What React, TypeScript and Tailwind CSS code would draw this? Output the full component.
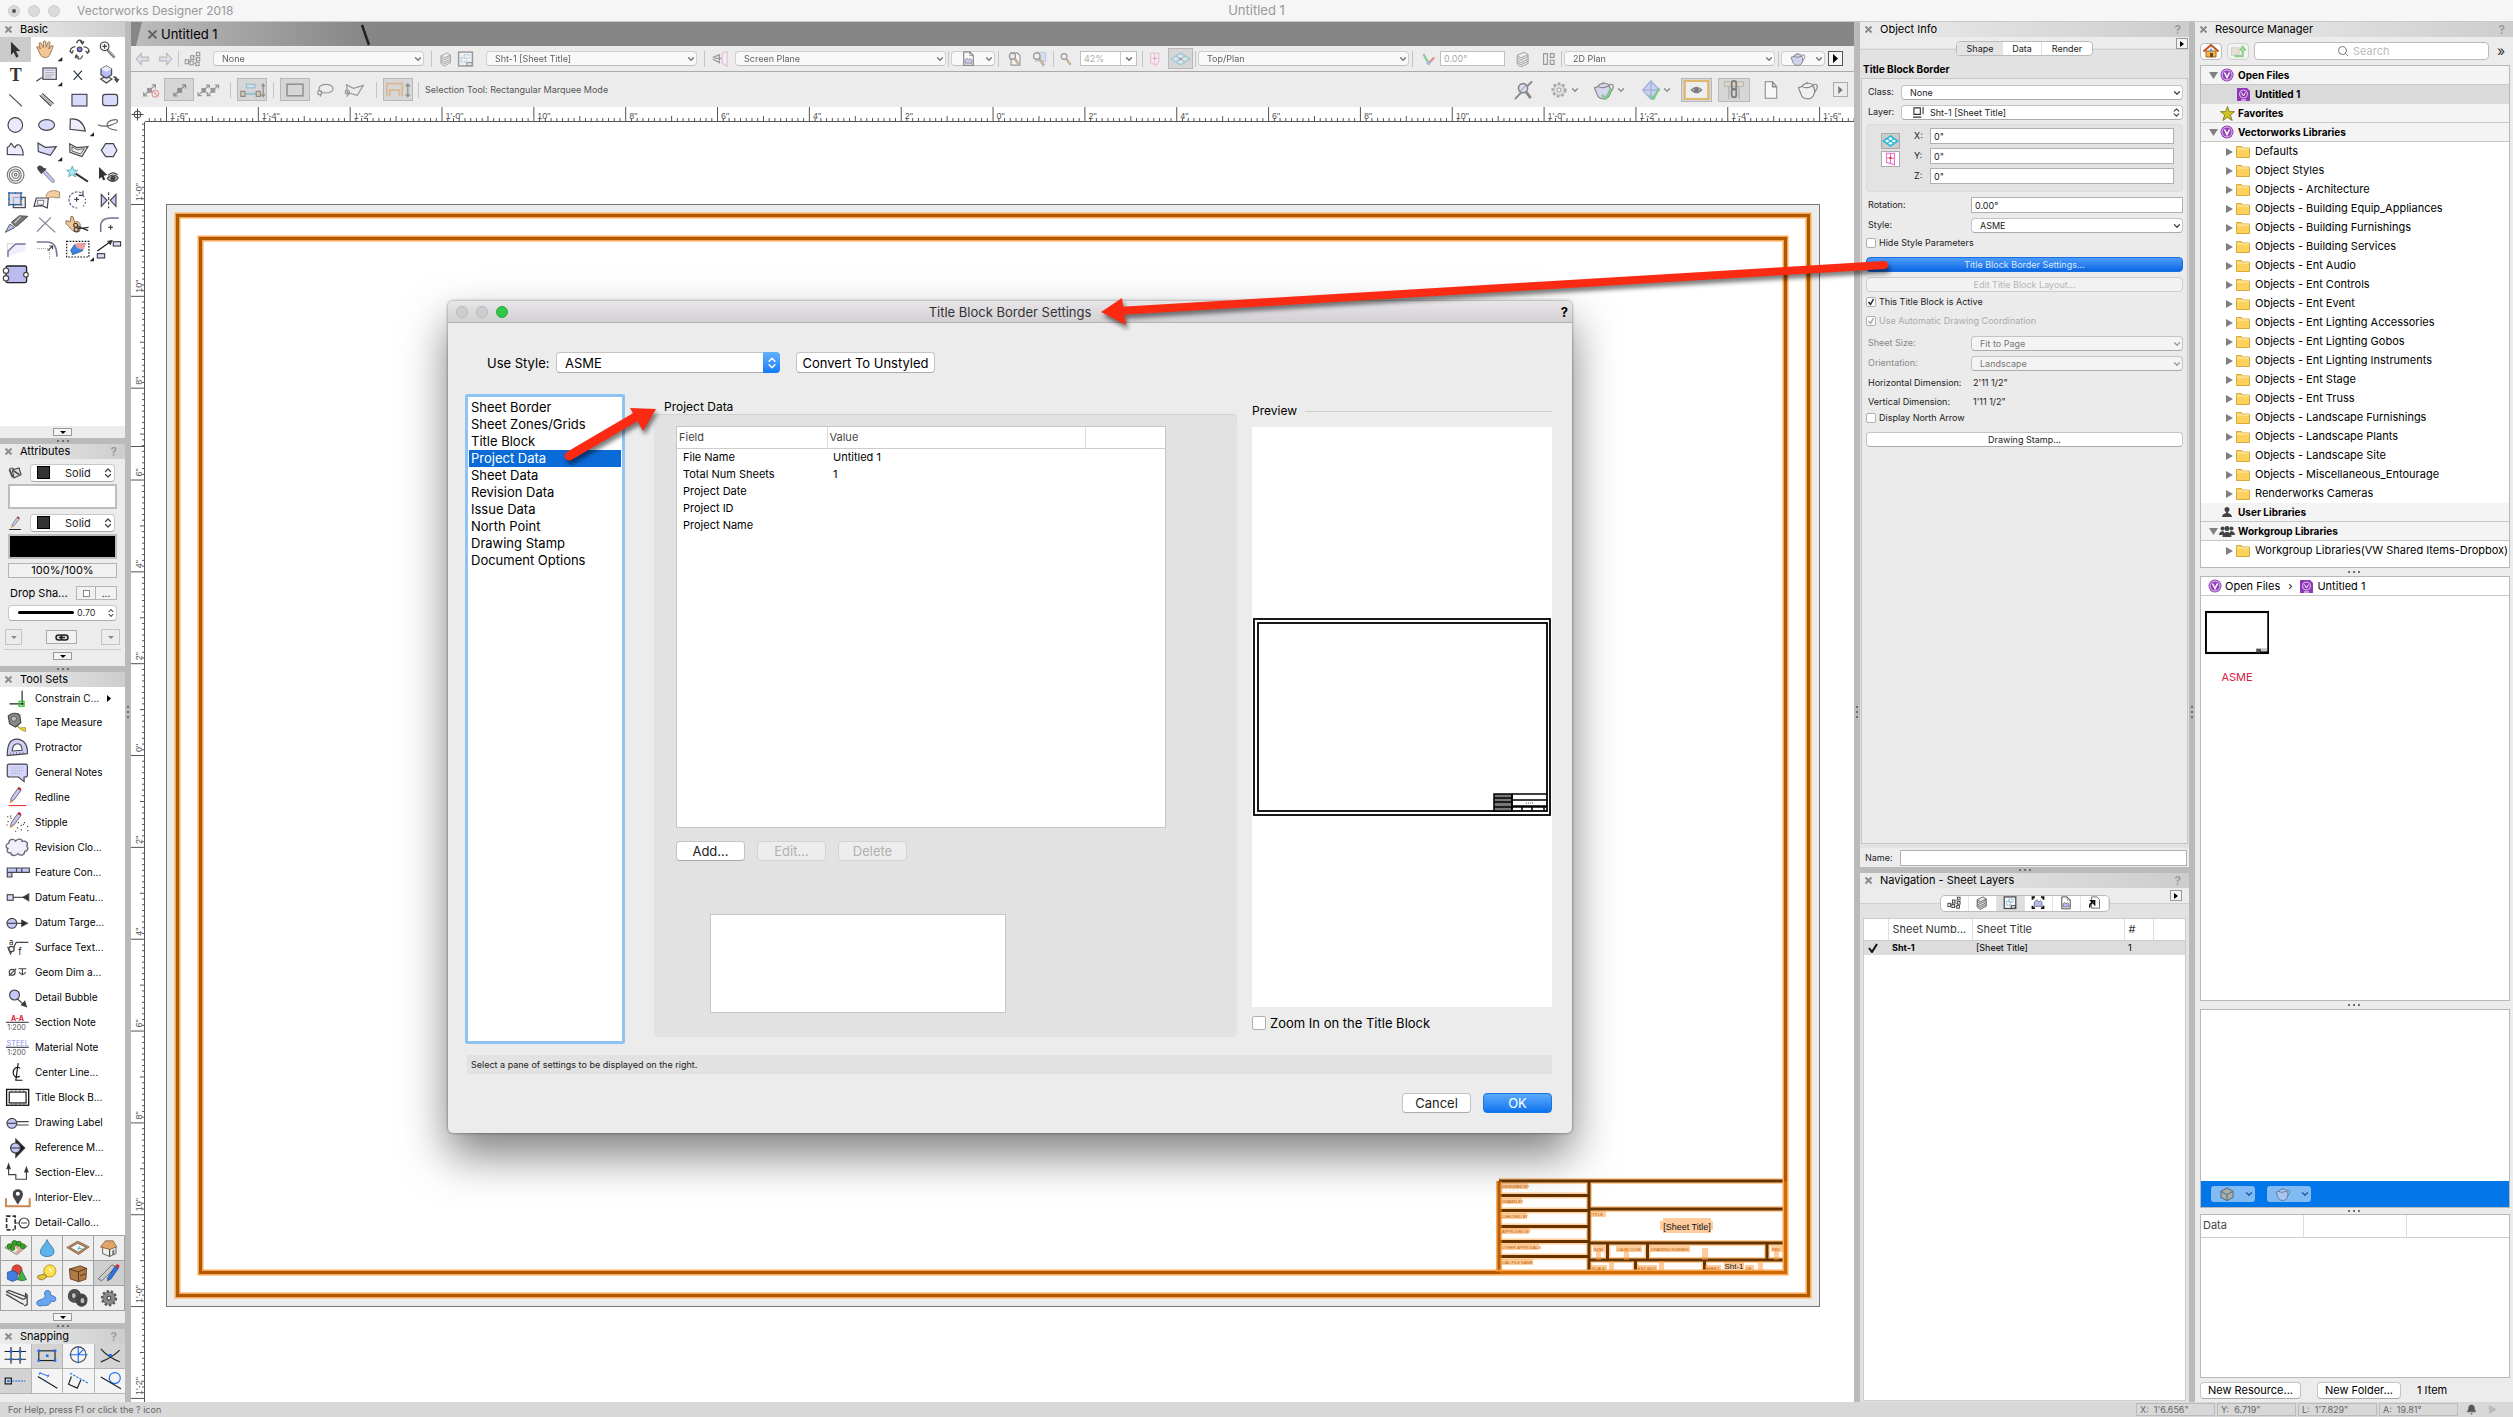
import { useState } from 'react';
import type { ReactNode } from 'react';
import { ChevronDown, ChevronsUpDown, Search, Bell } from 'lucide-react';

const LAV = '#d9dafa';
const INK = '#444448';

/* ---------- small shared pieces ---------- */

function Art({ box, className, children }: { box: string; className: string; children: ReactNode }) {
    return (
        <svg viewBox={box} className={className} fill="none" stroke={INK} strokeWidth="3.5" aria-hidden="true">
            {children}
        </svg>
    );
}

function PanelHeader({ title, help = true }: { title: string; help?: boolean }) {
    return (
        <div className="flex h-[15px] shrink-0 items-center bg-linear-to-r from-[#ececec] to-[#cdcdcd] pr-2 pl-[5px]">
            <button aria-label={`Close ${title}`} className="flex size-[7px] items-center">
                <svg viewBox="0 0 7 7" className="size-[7px]" stroke="#8c8c8c" strokeWidth="2"><path d="M.5 .5l6 6M6.5 .5l-6 6" /></svg>
            </button>
            <h2 className="ml-2 flex-1 text-[11px] leading-[15px] text-black">{title}</h2>
            {help && <button aria-label={`${title} help`} className="text-xs leading-[15px] font-semibold text-[#999]">?</button>}
        </div>
    );
}

function Dots({ vertical = false }: { vertical?: boolean }) {
    return (
        <span className={vertical ? 'flex flex-col gap-[3px]' : 'flex gap-[3px]'}>
            <i className="size-[2px] bg-[#6f6f6f]" /><i className="size-[2px] bg-[#6f6f6f]" /><i className="size-[2px] bg-[#6f6f6f]" />
        </span>
    );
}

function Splitter() {
    return <div className="flex h-[6px] shrink-0 items-center justify-center bg-[#bababa]"><Dots /></div>;
}

function Gutter() {
    return <div className="flex w-[6px] shrink-0 items-center justify-center bg-[#bababa]"><Dots vertical /></div>;
}

function MoreBar() {
    return (
        <div className="flex h-3 shrink-0 items-center justify-center bg-[#ececec]">
            <button aria-label="More" className="flex h-2 w-[19px] items-center justify-center border border-[#999] bg-[#f4f4f4]">
                <svg viewBox="0 0 6 3" className="h-[3px] w-[6px]"><path d="M0 0h6L3 3z" /></svg>
            </button>
        </div>
    );
}

function FlyButton({ label }: { label: string }) {
    return (
        <button aria-label={label} className="flex h-[11px] w-3 items-center justify-center border border-[#999] bg-[#f3f3f3]">
            <svg viewBox="0 0 4 6" className="h-[6px] w-1"><path d="M0 0v6l4-3z" /></svg>
        </button>
    );
}

type SelectProps = { label: string; value: string; className: string; pad?: string; updown?: boolean; disabled?: boolean };

function Select({ label, value, className, pad = 'pl-2', updown, disabled }: SelectProps) {
    return (
        <span className={'relative flex h-[15px] ' + className}>
            <select
                aria-label={label}
                disabled={disabled}
                className={'size-full appearance-none rounded-[4px] border border-[#c4c4c4] border-b-[#aaa] text-[9px] leading-[13px] ' + pad + (disabled ? ' bg-[#f4f4f4] text-[#777]' : ' bg-white text-[#222]')}
            >
                <option>{value}</option>
            </select>
            {updown
                ? <ChevronsUpDown className="pointer-events-none absolute top-[2px] right-[1px] size-[11px] text-[#444]" strokeWidth={2.5} />
                : <ChevronDown className={'pointer-events-none absolute top-[3px] right-[1px] size-[10px] ' + (disabled ? 'text-[#999]' : 'text-[#444]')} strokeWidth={3} />}
        </span>
    );
}

function Check({ label, checked = false, disabled = false, big = false }: { label: string; checked?: boolean; disabled?: boolean; big?: boolean }) {
    const [on, setOn] = useState(checked);
    return (
        <label className={'flex items-center ' + (big ? 'gap-1 text-[13px] leading-4 text-black' : 'gap-[3px] text-[9px] ') + (disabled ? 'text-[#aaa]' : 'text-[#222]')}>
            <span className={'relative flex ' + (big ? 'size-[14px]' : 'size-[10px]')}>
                <input
                    type="checkbox"
                    checked={on}
                    disabled={disabled}
                    onChange={() => setOn(!on)}
                    className="size-full appearance-none rounded-[2px] border border-[#b0b0b0] bg-white"
                />
                {on && <svg viewBox="0 0 10 10" className="pointer-events-none absolute inset-0" fill="none" stroke="currentColor" strokeWidth="1.5"><path d="M2.5 5l2 2.5 3-5.5" /></svg>}
            </span>
            {label}
        </label>
    );
}

/* ---------- Basic palette: every drawing uses a 94 x 75 cell ---------- */

const flyout = <path d="M94 60v13H80z" fill="#222" stroke="none" />;

const basicTools: [string, ReactNode][] = [
    ['Selection', <path d="M33 14L61 42L48 43L56 58L49 62L41 46L33 54z" fill="#333" stroke="none" />],
    ['Pan', <><path d="M17 30c5-3 8 0 11 6L24 19c3-4 6-2 7 1l6 12V14c3-4 7-3 7 0l2 17 5-15c3-3 7-1 6 3l-3 17 7-10c4-2 7 1 5 4L56 55c-5 9-20 8-26 1z" fill="#f3c795" stroke="#8a6848" strokeWidth="2.5" />{flyout}</>],
    ['Flyover', <><circle cx="50" cy="37" r="7" fill="#7b86e8" /><path d="M25 47c-8-9 2-17 12-18M62 29c14 2 20 11 12 18M39 54c3 16 16 16 20 1M59 20C56 6 44 6 41 19M20 42l7 7 4-9M68 42l6 7 6-8M52 13l7 8 4-9M48 62l-8-8-4 10" /></>],
    ['Zoom', <><path d="M39 37L62 62" stroke="#777" strokeWidth="8" /><path d="M41 37L62 60" stroke="#ddd" strokeWidth="2" /><circle cx="32" cy="28" r="13" fill="#f7f7fb" /><path d="M25 28h14M32 21v14" /></>],
    ['Text', <text x="29" y="57" fontSize="54" fontFamily="Liberation Serif, serif" fontWeight="bold" fill="#333" stroke="none">T</text>],
    ['Callout', <><path d="M16 58l14-10h7" /><rect x="36" y="18" width="40" height="34" fill="#e8e8fb" /><path d="M42 25h28M42 32h28M42 39h28M42 45h20" strokeWidth="2" stroke="#888" />{flyout}</>],
    ['Locus', <path d="M32 26L57 54M57 26L32 54" stroke="#1f3a44" />],
    ['Symbol Insertion', <><path d="M20 51l17-9 17 9-17 12z" fill="#eee" /><path d="M37 12l16 9v17l-16 11-16-11V21z" fill="#b9bbf4" /><path d="M21 21l16 8 16-8L37 12z" fill="#eeeefe" stroke="none" /><path d="M58 45c10-2 12 3 11 10M62 52l7 9 6-9z" fill="#555" strokeWidth="3" /></>],
    ['Line', <path d="M28 22l38 36" />],
    ['Double Line', <><path d="M26 25l34 32M34 19l34 31" /><path d="M31 23l33 31" stroke="#999" /></>],
    ['Rectangle', <rect x="27" y="22" width="45" height="35" fill={LAV} />],
    ['Rounded Rectangle', <rect x="26" y="22" width="45" height="34" rx="8" fill={LAV} />],
    ['Circle', <circle cx="46" cy="39" r="22" fill="#e9eafc" />],
    ['Oval', <ellipse cx="47" cy="39" rx="24" ry="16" fill={LAV} />],
    ['Arc', <><path d="M22 21c24-2 40 12 45 36L21 52z" fill="#ececfc" />{flyout}</>],
    ['Freehand', <path d="M12 38c10 5 22 6 36 2 14-4 24-9 23-14-3-6-29-2-32 12-1 14 22 16 31 17" stroke="#666" />],
    ['Polyline', <path d="M22 52V31c7-2 9-9 11-12 6 2 5 13 12 13 3-9 10-12 17-5 6 8 8 14 8 27z" fill="#ececfc" />],
    ['Polygon', <><path d="M21 18l22 13 33-2-18 26-36-11z" fill={LAV} />{flyout}</>],
    ['Double Polygon', <><path d="M20 20l22 12 33-3-18 30-36-13z" fill="#eee" /><path d="M27 29l16 9 21-3-11 16-26-9z" strokeWidth="2.5" /></>],
    ['Regular Polygon', <path d="M35 20h23l11 20-11 19H35L22 40z" fill="#e4e5fc" />],
    ['Spiral', <><circle cx="47" cy="39" r="25" stroke="#777" /><circle cx="46" cy="39" r="18" stroke="#777" /><circle cx="47" cy="38" r="11" stroke="#777" /><circle cx="47" cy="38" r="4" stroke="#777" /></>],
    ['Eyedropper', <><path d="M32 28l8-7 30 33c3 8-3 9-8 6z" fill="#babdf3" stroke="#888" strokeWidth="2.5" /><path d="M20 17c5-9 14-3 15 1l9 3-13 13c-3-6-9-8-11-17z" fill="#444" /></>],
    ['Attribute Wand', <><path d="M38 35l37 24" stroke="#333" strokeWidth="6" /><path d="M28 12l4 12 12 1-10 8 4 12-11-7-10 6 3-12-9-7 12-1z" fill="#a5eef5" stroke="#418c9c" strokeWidth="2" /></>],
    ['Visibility', <><path d="M15 15L40 39L29 41L34 53L27 55L23 45L15 51z" fill="#333" stroke="none" /><path d="M40 49c10-13 25-13 33-1-8 14-26 13-33 1z" fill="#bbb" /><circle cx="57" cy="49" r="6" fill="#444" /><path d="M42 40c9-9 20-9 29-2" /></>],
    ['Clip', <><rect x="40" y="31" width="36" height="31" fill="#eee" /><rect x="27" y="18" width="36" height="35" fill="#d3d4f6" fillOpacity=".7" /><path d="M24 18h6m14 0h5m12 0h6M24 36h5m33 0h5M24 53h6m14 0h5m12 0h6" stroke="#1688f2" strokeWidth="6" /></>],
    ['Reshape', <><path d="M9 58l7-25h36l-3 30-16-7z" fill="#f4f4fa" /><path d="M19 40h20l-2 13-16 2z" strokeWidth="2" /><path d="M46 23c6-12 22-16 40-8v17c-12 3-18-5-27-1-6 3-16 1-13-8z" fill="#f3cda4" stroke="#9c7854" strokeWidth="2.5" /></>],
    ['Rotate', <><path d="M55 18c-14-10-37 2-37 19 0 14 10 26 25 26" stroke="#5b5b8c" strokeDasharray="8 4" /><path d="M60 26c10 9 12 22 0 32" stroke="#5b5b8c" strokeDasharray="5 6" /><path d="M60 11v14H47M41 30v14M34 37h14" /></>],
    ['Mirror', <><path d="M22 22v36l17-18zM66 22v36L49 40z" fill="#c7c9f6" /><path d="M44 16v48" strokeDasharray="9 5" /></>],
    ['Split', <><path d="M16 61l14-25 14 11z" fill="#b9bcee" strokeWidth="2.5" /><path d="M34 31L58 11l26 2-30 27-8 4z" fill="#777" strokeWidth="2.5" /><path d="M62 14L44 33" stroke="#ccc" /></>],
    ['Trim', <path d="M18 59L60 16M24 17l49 44" stroke="#7c7c92" />],
    ['Connect', <><path d="M9 26l13 3 2-16 6 1 5 17c8-6 17 0 17 10l-2 17c-14 6-23-3-31-13l-10-10z" fill="#f3c795" stroke="#7d5a3a" strokeWidth="2.5" /><circle cx="38" cy="40" r="6" /><circle cx="40" cy="53" r="6" /><path d="M44 43l32 13M45 50l32-4" strokeWidth="4" stroke="#333" /></>],
    ['Fillet', <><path d="M20 60V40c2-15 15-22 30-22h25" stroke="#76769c" strokeWidth="4.5" /><path d="M22 60V20h50" stroke="#777" strokeWidth="2" strokeDasharray="2 4" /><path d="M50 39v14M43 46h14" /></>],
    ['Chamfer', <><path d="M24 58V43l23-22h30v20L24 58z" fill="#eeeefd" stroke="none" /><path d="M24 60V43l23-22h30" stroke="#76769c" strokeWidth="4.5" /><path d="M22 40V20h20" strokeWidth="2" strokeDasharray="2 4" /></>],
    ['Offset', <><path d="M17 15h30c20 0 30 10 31 44" stroke="#76769c" strokeWidth="5" /><path d="M18 35h38v30" strokeWidth="2.5" strokeDasharray="2 4" /><path d="M50 41l14-13M55 27h10v10" /></>],
    ['Eraser', <><rect x="11" y="13" width="67" height="47" stroke="#111" strokeDasharray="5 4" /><path d="M23 40l12-18 32-2-9 22-29 11z" fill="#3a86e8" stroke="#345" strokeWidth="2" /><path d="M35 22l15-5 18 5-7 16-18-4z" fill="#ef9e9e" stroke="none" />{flyout}</>],
    ['Connection', <><path d="M10 42l42-30" stroke="#111" /><path d="M54 11l-12 2 7 9z" fill="#111" /><rect x="58" y="14" width="22" height="13" fill={LAV} /><rect x="10" y="50" width="22" height="13" fill={LAV} /></>],
    ['Symbol', <><rect x="18" y="12" width="62" height="50" rx="5" fill="#babcf0" stroke="#222" strokeWidth="4" /><circle cx="18" cy="26" r="8" fill="#fff" /><circle cx="18" cy="49" r="8" fill="#fff" /><circle cx="78" cy="38" r="7" fill="#fff" /></>],
];

/* ---------- Tool sets: 100 x 75 cells ---------- */

const bubble = <><circle cx="36" cy="40" r="15" fill="#c6c8f7" /><path d="M21 40h30" /></>;
const pencil = <><path d="M31 50l4-13 20-28 9 6-21 29z" fill="#c6c8f2" stroke="#555" strokeWidth="2.5" /><path d="M53 11l9 6 3-6-8-6z" fill="#c0272d" stroke="none" /><path d="M29 56l3-12 8 6z" fill="#e0a45c" stroke="none" /></>;

const toolSets: [string, ReactNode][] = [
    ['Constrain C...', <><path d="M29 54h44M67 14v44" stroke="#222" /><rect x="58" y="46" width="15" height="15" stroke="#18c71b" /></>],
    ['Tape Measure', <><path d="M45 34l14 20 18-1v12l-12-5-20-17z" fill="#f2d92c" stroke="#8a7c1d" strokeWidth="2" /><path d="M25 18c7-10 29-12 35-2l3 22-16 13-18-10z" fill="#888" /><circle cx="42" cy="26" r="8" fill="#bbb" strokeWidth="2" /></>],
    ['Protractor', <><path d="M22 62c0-31 7-51 31-50 24 3 31 20 30 44z" fill="#cfd1f9" /><path d="M37 48c1-16 6-22 16-22 9 0 14 8 14 20z" fill="#fff" /><path d="M31 60v-7m9 6v-6m10 4v-5m10 4v-5m10 4v-5" strokeWidth="2" /></>],
    ['General Notes', <><path d="M22 17q0-5 6-5h50q5 0 5 5v28q0 6-6 6h-4v14L56 51H28q-6 0-6-6z" fill="#d3d5fb" /><path d="M34 24h37M34 32h37M34 40h30" stroke="#999" strokeWidth="2" strokeDasharray="3 3" /></>],
    ['Redline', <>{pencil}<path d="M26 62h54" stroke="#e0262b" strokeWidth="3" /></>],
    ['Stipple', <>{pencil}<path d="M22 20h3m7 5h3m-12 10h3m-6 10h3m8-27h3m20 20h3m6 8h3m-14 8h3m8 6h3m-20 4h3m24-26h3m6 12h3m-2 12h3m-16-19h3" stroke="#222" /></>],
    ['Revision Clo...', <path d="M27 24c0-13 15-14 20-6 8-9 20-7 20 1 12-4 20 6 14 14 8 8 0 16-6 16 0 13-14 15-20 7-8 8-22 8-22-2-12 2-14-9-9-13-9-5-7-14 3-17z" fill="#f0f0fb" stroke="#66667f" strokeWidth="4" />],
    ['Feature Con...', <><path d="M22 24h67v13H36v14H22z" fill="#c4c7f8" /><path d="M36 37H22M50 24v13M66 24v13" /></>],
    ['Datum Featu...', <><rect x="22" y="29" width="18" height="17" fill={LAV} /><path d="M40 37h32" /><path d="M70 37l17-10v20z" fill="#333" /></>],
    ['Datum Targe...', <>{bubble}<path d="M51 40h18" /><path d="M66 31l17 9-17 9z" fill="#222" /></>],
    ['Surface Text...', <><path d="M23 35l9 22 17-35h37M27 38h16" /><circle cx="35" cy="42" r="8" fill="#eee" /><text x="27" y="29" fontSize="24" fill="#222" stroke="none">a</text><text x="55" y="60" fontSize="28" fill="#222" stroke="none">f</text></>],
    ['Geom Dim a...', <><circle cx="37" cy="37" r="9" /><path d="M27 48l22-22M56 26h24M68 26v20M58 36q10 16 20 0" /></>],
    ['Detail Bubble', <><circle cx="44" cy="30" r="15" fill="#c6c8f7" /><path d="M53 42l22 20" /><path d="M65 60l15 5-5-16z" fill="#333" /></>],
    ['Section Note', <><text x="33" y="32" fontSize="21" fontWeight="bold" fill="#d9252f" stroke="none">A-A</text><path d="M18 37h69" /><text x="22" y="60" fontSize="22" fill="#555" stroke="none">1:200</text></>],
    ['Material Note', <><text x="20" y="32" fontSize="22" fill="#8d90ea" stroke="none">STEEL</text><path d="M18 37h69" /><text x="22" y="60" fontSize="22" fill="#555" stroke="none">1:200</text></>],
    ['Center Line...', <path d="M61 25c-10-9-21 2-21 13s10 18 20 10M55 9L48 61h20" stroke="#111" />],
    ['Title Block B...', <><rect x="20" y="13" width="67" height="48" stroke="#111" strokeWidth="4" /><rect x="28" y="21" width="51" height="33" stroke="#111" /><path d="M36 13v8m12-8v8m12-8v8m12-8v8M36 53v8m12-8v8m12-8v8m12-8v8" strokeWidth="2" /></>],
    ['Drawing Label', <>{bubble}<path d="M51 35h36M51 45h36" /></>],
    ['Reference M...', <><path d="M48 12l27 27-27 28v-13l8-14-8-14z" fill="#111" /><circle cx="47" cy="39" r="15" fill="#c6c8f7" /><path d="M32 39h30" /></>],
    ['Section-Elev...', <><path d="M26 23v21h22v14h32V34" /><path d="M26 12l-5 14h10zM80 22l-5 14h10z" fill="#222" /></>],
    ['Interior-Elev...', <><path d="M18 40v24h72V40" stroke="#c98850" strokeWidth="6" /><path d="M54 56L42 36c-5-15 2-22 12-22s17 8 12 22z" fill="#444" /><circle cx="54" cy="26" r="8" fill="#fff" /></>],
    ['Detail-Callo...', <><path d="M32 18H20v42h12M38 18h8v42h-8" stroke="#333" strokeWidth="5" strokeDasharray="13 5" /><path d="M46 39h12M64 39h18" /><circle cx="73" cy="39" r="15" /></>],
];

const categories: ReactNode[] = [
    <><path d="M12 36l34-19 36 15-32 26z" fill="#d9efd0" strokeWidth="2" /><path d="M44 30l18 14-14 9" stroke="#e0a3a3" strokeWidth="8" /><g fill="#35a321" stroke="#1c5c12" strokeWidth="2"><circle cx="27" cy="32" r="8" /><circle cx="42" cy="22" r="8" /><circle cx="56" cy="24" r="8" /><circle cx="68" cy="32" r="8" /><circle cx="36" cy="38" r="7" /></g></>,
    <path d="M47 11c5 14 22 25 22 39 0 19-43 19-43 0 0-14 17-25 21-39z" fill="#5db4ea" stroke="#2f6f9c" strokeWidth="2.5" />,
    <><path d="M12 36l34-20 36 18-33 24z" fill="#c98852" stroke="#6b4425" strokeWidth="2" /><path d="M22 36l24-13 26 12-24 16z" fill="#f1f7f4" strokeWidth="2" /><path d="M46 38l14 2M48 44l4-12" stroke="#3aa6a6" strokeWidth="2.5" /></>,
    <><path d="M27 34l22 7v23l-22-9zM49 41l20-8v22l-20 9z" fill="#f4f1ec" strokeWidth="2.5" /><path d="M20 34l16-19h24l11 19-22 8z" fill="#e3a369" stroke="#6b4425" strokeWidth="2" /><path d="M57 45l7-3v15l-7 3z" fill="#777" stroke="none" /></>,
    <><circle cx="50" cy="28" r="16" fill="#e0443d" stroke="#8d221d" strokeWidth="2" /><path d="M20 35l17-5 14 6v22l-15 6-16-7z" fill="#3f7ee0" stroke="#1d437f" strokeWidth="2" /><path d="M64 28l16 30q-15 8-28 0z" fill="#44b04a" stroke="#1f6424" strokeWidth="2" /></>,
    <><circle cx="56" cy="31" r="19" fill="#fbe14b" stroke="#a88c14" strokeWidth="2.5" /><path d="M39 40l8 10-14 9q-18-1-15-12z" fill="#e8c43c" stroke="#7f6a17" strokeWidth="2.5" /><path d="M52 24q8 0 8 12" stroke="#fff" /></>,
    <><path d="M20 25l34-10 20 8-2 34-23 8-26-9z" fill="#b07a48" stroke="#5a3417" strokeWidth="2.5" /><path d="M20 25l28 9 26-11M48 34l1 30M54 46l17-6" stroke="#5a3417" strokeWidth="3" /></>,
    <><path d="M13 56L56 12l14 6-46 44z" fill="#c9c9c9" strokeWidth="2" /><path d="M43 52l23-36 11 6-24 34-10 6z" fill="#3371e0" stroke="#1c3d7c" strokeWidth="2" /><path d="M66 16l11 6 4-7-9-6z" fill="#d5302b" stroke="none" /></>,
    <><path d="M16 18l54 24M16 26l42 25M16 18l9-4 52 19v-9l5 4v30l-9 4M70 42l12-8M58 51l14 7" strokeWidth="4" /></>,
    <path d="M15 50c8-10 22-6 27-19-6-10-1-18 8-17 7 1 9 7 8 14 8 4 13 3 16 9 3 12-8 15-14 9-3 14-12 16-27 15-12 5-20-3-18-11z" fill="#6aa5f3" stroke="#2e63ae" strokeWidth="2.5" />,
    <><ellipse cx="36" cy="31" rx="19" ry="20" fill="#555" /><ellipse cx="34" cy="30" rx="8" ry="10" fill="#bbb" /><ellipse cx="58" cy="44" rx="17" ry="19" fill="#444" /><ellipse cx="61" cy="46" rx="8" ry="10" fill="#bbb" /></>,
    <><circle cx="47" cy="38" r="21" fill="#777" stroke="#555" strokeWidth="9" strokeDasharray="7 6" /><circle cx="47" cy="38" r="18" fill="#8b8b8b" stroke="none" /><circle cx="47" cy="38" r="6" fill="#ececec" /></>,
];

const snaps: ReactNode[] = [
    <><path d="M14 22h66M14 46h66M34 8v52M62 8v52" stroke="#222" /><path d="M30 22h8m20 0h8M30 46h8m20 0h8" stroke="#1a6df0" strokeWidth="8" /></>,
    <><rect x="21" y="20" width="50" height="30" stroke="#222" /><path d="M17 20h8m42 0h8M17 50h8m42 0h8M43 35h8" stroke="#1a6df0" strokeWidth="8" /></>,
    <><circle cx="47" cy="32" r="24" /><path d="M20 32h56M47 6v52M47 32l18-18" stroke="#1a6df0" /></>,
    <><path d="M18 14q20 24 58 40M18 54q34-12 58-36" stroke="#222" /><path d="M43 34h9" stroke="#1a6df0" strokeWidth="8" /></>,
    <><rect x="16" y="27" width="19" height="18" stroke="#111" /><path d="M22 36h8" stroke="#1a6df0" strokeWidth="6" /><path d="M38 36h40" stroke="#1a6df0" strokeDasharray="6 3" /></>,
    <><path d="M18 22l60 36" stroke="#222" /><path d="M24 11l27 10M26 8l-4 9M52 16l-4 9M38 36h6" stroke="#1a6df0" strokeWidth="3" /></>,
    <><path d="M26 22l-9 24 27 12 11-25" stroke="#222" /><path d="M22 12l58 32" stroke="#1a6df0" strokeDasharray="7 4" /></>,
    <><circle cx="61" cy="27" r="17" stroke="#1a6df0" /><path d="M18 24l62 36" stroke="#222" /></>,
];

function AttrSelect({ label }: { label: string }) {
    return (
        <span className="relative flex h-[18px] w-[85px]">
            <select aria-label={label} className="size-full appearance-none rounded-[4px] border border-[#c8c8c8] border-b-[#aaa] bg-white pl-[34px] text-[11px] text-[#222]"><option>Solid</option></select>
            <i className="pointer-events-none absolute top-[2px] left-[7px] size-[13px] border border-black bg-[#333]" />
            <ChevronsUpDown className="pointer-events-none absolute top-[3px] right-[1px] size-3 text-[#444]" strokeWidth={2.5} />
        </span>
    );
}

function LeftColumn() {
    return (
        <aside className="flex w-[125px] shrink-0 flex-col bg-[#ececec]">
            <PanelHeader title="Basic" help={false} />
            <div className="h-[389px] shrink-0 bg-white">
                <div className="grid grid-cols-4">
                    {basicTools.map(([name, art], i) => (
                        <button key={name} aria-label={name} className={i === 0 ? 'h-[25px] bg-[#cbcbcb]' : 'h-[25px]'}>
                            <Art box="0 0 94 75" className="h-[25px] w-full">{art}</Art>
                        </button>
                    ))}
                </div>
            </div>
            <MoreBar />
            <Splitter />
            <PanelHeader title="Attributes" />
            <div className="flex h-[207px] shrink-0 flex-col px-2 pt-[5px]">
                <div className="flex items-center gap-2">
                    <Art box="0 0 42 42" className="size-[14px]"><path d="M4 10q8-8 14 0M13 12l20-6 6 20-21 10z" fill="#ddd" /><path d="M4 10l10 24M16 14l18 12" strokeWidth="5" /></Art>
                    <AttrSelect label="Fill style" />
                </div>
                <button aria-label="Fill colour" className="mt-[2px] h-[25px] border-2 border-[#bdbdbd] bg-white" />
                <div className="mt-[5px] flex items-center gap-2">
                    <Art box="20 4 50 60" className="size-[14px]">{pencil}<path d="M20 62h50" stroke="#111" strokeWidth="4" /></Art>
                    <AttrSelect label="Pen style" />
                </div>
                <button aria-label="Pen colour" className="mt-[2px] h-[25px] border-2 border-[#bdbdbd] bg-black" />
                <button className="mt-1 h-[15px] border border-[#b5b5b5] bg-[#f1f1f1] text-[11px] leading-[13px]">100%/100%</button>
                <div className="mt-2 flex h-[14px] items-center justify-between pl-[2px] text-[11px]">
                    <span>Drop Sha...</span>
                    <span className="flex">
                        <button aria-label="Drop shadow" className="flex h-[14px] w-5 items-center justify-center border border-[#b5b5b5] bg-[#f1f1f1]"><i className="size-[7px] border border-[#888] bg-white" /></button>
                        <button className="h-[14px] w-[21px] border border-l-0 border-[#b5b5b5] bg-[#f1f1f1] text-[10px] leading-[10px]">...</button>
                    </span>
                </div>
                <span className="relative mt-[5px] flex h-4">
                    <select aria-label="Line thickness" className="size-full appearance-none rounded-[4px] border border-[#c8c8c8] border-b-[#aaa] bg-white pl-[68px] text-[9px] text-[#333]"><option>0.70</option></select>
                    <i className="pointer-events-none absolute top-[6px] left-[10px] h-[3px] w-14 rounded-full bg-black" />
                    <ChevronsUpDown className="pointer-events-none absolute top-[3px] right-[1px] size-[10px] text-[#444]" strokeWidth={2.5} />
                </span>
                <div className="-mx-[3px] mt-2 flex h-4 items-center justify-between">
                    <button aria-label="Start marker" className="flex h-4 w-[17px] items-center justify-center border border-[#c4c4c4]"><svg viewBox="0 0 6 3" className="h-[3px] w-[6px]" fill="#888"><path d="M0 0h6L3 3z" /></svg></button>
                    <button aria-label="Link markers" className="flex h-[14px] w-[31px] items-center justify-center border border-[#aaa] bg-[#f1f1f1]">
                        <svg viewBox="0 0 14 7" className="h-[7px] w-[14px]" fill="#ddd" stroke="#222" strokeWidth="1.5"><rect x="1" y="1" width="7" height="5" rx="2.5" /><rect x="6" y="1" width="7" height="5" rx="2.5" /><path d="M4 3.5h6" /></svg>
                    </button>
                    <button aria-label="End marker" className="flex h-4 w-[19px] items-center justify-center border border-[#c4c4c4]"><svg viewBox="0 0 6 3" className="h-[3px] w-[6px]" fill="#888"><path d="M0 0h6L3 3z" /></svg></button>
                </div>
                <div className="-mx-1 mt-1 border-t border-[#ccc]"><MoreBar /></div>
            </div>
            <Splitter />
            <PanelHeader title="Tool Sets" help={false} />
            <ul className="min-h-0 flex-1 bg-white">
                {toolSets.map(([name, art], i) => (
                    <li key={name} className={i === 0 ? 'flex h-[23px]' : 'flex h-[25px]'}>
                        <button className="flex w-full items-center text-left text-[10px] text-black">
                            <Art box="0 0 100 75" className="h-[25px] w-[33px] shrink-0">{art}</Art>
                            <span className="ml-[2px] whitespace-nowrap">{name}</span>
                            {i === 0 && <svg viewBox="0 0 4 7" className="ml-2 h-[7px] w-1"><path d="M0 0v7l4-3.5z" /></svg>}
                        </button>
                    </li>
                ))}
            </ul>
            <div className="grid shrink-0 grid-cols-4 gap-px border border-[#a2a2a2] bg-[#a2a2a2]">
                {categories.map((art, i) => (
                    <button key={i} aria-label={`Tool set ${i + 1}`} className={i === 7 ? 'h-6 bg-[#cfcfcf]' : 'h-6 bg-[#efefef]'}>
                        <Art box="0 0 94 75" className="h-6 w-full">{art}</Art>
                    </button>
                ))}
            </div>
            <MoreBar />
            <Splitter />
            <PanelHeader title="Snapping" />
            <div className="grid shrink-0 grid-cols-4 gap-px bg-[#b5b5b5] pb-px">
                {snaps.map((art, i) => (
                    <button key={i} aria-label={`Snap ${i + 1}`} className={i === 1 || i === 3 || i === 4 ? 'h-6 bg-[#d3d3d3]' : 'h-6 bg-[#f4f4f4]'}>
                        <Art box="0 0 94 72" className="h-6 w-full">{art}</Art>
                    </button>
                ))}
            </div>
            <div className="h-2 shrink-0 bg-[#ececec]" />
        </aside>
    );
}

/* ---------- drawing window ---------- */

const nodes = <><path d="M10 28l11-6M24 18l12-9M24 22l12 4M24 34l10 1" strokeWidth="2" /><g fill="#eee" strokeWidth="3"><rect x="2" y="24" width="9" height="11" /><rect x="15" y="28" width="9" height="10" /><rect x="17" y="13" width="8" height="10" /><rect x="33" y="4" width="9" height="9" /><rect x="33" y="18" width="9" height="9" /><rect x="31" y="31" width="9" height="9" /></g></>;
const stack = <><path d="M6 12L26 3l10 7v24L16 44 6 36z" fill="#eee" strokeWidth="2.5" /><path d="M6 18l10 7 20-10M6 25l10 7 20-10M6 31l10 7 20-10M6 12l10 7 20-9" strokeWidth="2.5" /></>;
const sheet = <><rect x="3" y="3" width="38" height="38" fill="#f6f6f6" strokeWidth="4" /><path d="M10 18h14v12H10zM18 10h14v10H18z" stroke="#6aa8d8" strokeWidth="3" strokeDasharray="4 3" /><rect x="26" y="32" width="14" height="8" fill="#fff" /></>;
const pageArt = <><path d="M8 3h18l10 10v29H8z" fill="#fff" strokeWidth="3" /><path d="M26 3v10h10" strokeWidth="2" /><path d="M12 36V26l5-5 5 5 5-4 5 5v9z" fill="#b7bbf5" strokeWidth="2" /></>;
const lens = <><path d="M22 20l14 20" stroke="#9b7f52" strokeWidth="8" /><circle cx="16" cy="14" r="9" fill="#eee" /></>;
const planeTop = <><path d="M24 5l22 14-22 14L2 19z" fill="#e4f6fb" stroke="#65bcd6" /><path d="M13 12l22 14M35 12L13 26" stroke="#65bcd6" /><circle cx="24" cy="19" r="3" fill="#d33" stroke="none" /></>;
const planeFront = <><path d="M8 4h26v26l-8 12-18-8z" fill="#fdf0f8" stroke="#e98cc6" /><path d="M8 19l26 2M21 4v34" stroke="#e98cc6" /><circle cx="21" cy="20" r="3" fill="#d33" stroke="none" /></>;
const gear = <><circle cx="22" cy="22" r="15" stroke="#777" strokeWidth="7" strokeDasharray="6 5" /><circle cx="22" cy="22" r="13" fill="#ddd" stroke="#777" strokeWidth="2" /><circle cx="22" cy="22" r="5" fill="#fff" strokeWidth="2" /></>;
const tick = <path d="M20 32l7 10 13-24" stroke="#35b54a" strokeWidth="5" />;
const marks = (dx: number) => <><path d={`M${8 + dx} 38L${40 + dx} 8M${30 + dx} 8h10v10M${8 + dx} 28v10h10`} /><rect x={19 + dx} y="18" width="10" height="10" fill="#444" /></>;

function Teapot({ fill = '#c5c9f3' }: { fill?: string }) {
    return (
        <g fill={fill} strokeWidth="2.5">
            <path d="M34 12c8-6 13 0 9 8l-8 12" fill="none" />
            <path d="M12 14L3 17l6 15c3 10 20 14 27 2 4-8 3-15-1-21z" />
            <path d="M11 14c2-7 20-10 24-2-5 5-18 7-24 2zM22 8V4" />
        </g>
    );
}

type BitProps = { name: string; box?: string; className: string; pressed?: boolean; tall?: boolean; children: ReactNode };

function Bit({ name, box = '0 0 44 44', className, pressed, tall, children }: BitProps) {
    return (
        <button aria-label={name} className={'flex shrink-0 items-center justify-center ' + className + (pressed ? ' border border-[#b8b8b8] bg-[#d6d6d6]' : '')}>
            <Art box={box} className={tall ? 'h-5 w-full opacity-60' : 'h-4 w-full opacity-50'}>{children}</Art>
        </button>
    );
}

function Sep({ className }: { className: string }) {
    return <i className={'h-4 w-px shrink-0 bg-[#c4c4c4] ' + className} />;
}

function ViewBar() {
    return (
        <div className="flex h-[26px] shrink-0 items-center overflow-hidden border-b border-[#aaa] bg-[#ececec] pl-1 text-[#666]">
            <Bit name="Back" className="w-[14px]"><path d="M20 4L4 22l16 18V28h22V16H20z" fill="#d5d7f4" stroke="#888" /></Bit>
            <Bit name="Forward" className="ml-[10px] w-[14px]"><path d="M24 4l16 18-16 18V28H2V16h22z" fill="#d5d7f4" stroke="#888" /></Bit>
            <Sep className="mx-[5px]" />
            <Bit name="Classes" className="w-[17px]">{nodes}</Bit>
            <Select label="Active class" value="None" className="ml-3 w-[211px] shrink-0 opacity-70" />
            <Sep className="mx-[7px]" />
            <Bit name="Layers" className="w-[14px]">{stack}</Bit>
            <Bit name="Sheets" className="ml-1 w-[17px]">{sheet}</Bit>
            <Select label="Active layer" value="Sht-1 [Sheet Title]" className="ml-3 w-[211px] shrink-0 opacity-70" />
            <Sep className="ml-[7px]" />
            <Bit name="Plane" className="ml-[3px] w-6"><path d="M2 18l18-8v22L2 22M8 20h20" /><path d="M28 6l14-4v40l-14-8z" stroke="#e0a0d0" fill="#fbeef7" /></Bit>
            <Select label="Plane mode" value="Screen Plane" className="ml-[3px] w-[211px] shrink-0 opacity-70" />
            <Sep className="mx-[2px]" />
            <span className="relative flex opacity-70"><Select label="Saved views" value="" className="w-11 shrink-0" /><Art box="0 0 44 44" className="pointer-events-none absolute top-0 left-[10px] size-[15px]">{pageArt}</Art></span>
            <Sep className="mx-[3px]" />
            <Bit name="Fit to page" className="ml-[5px] w-[15px]"><path d="M12 4h18l8 8v28H12z" fill="#fff" />{lens}</Bit>
            <Bit name="Fit to objects" className="ml-2 w-[18px]"><rect x="12" y="4" width="28" height="24" fill="#c9cdf6" stroke="#5b8ad8" strokeDasharray="4 3" />{lens}</Bit>
            <Sep className="mx-[5px]" />
            <Bit name="Zoom" className="w-[14px]">{lens}</Bit>
            <span className="relative ml-[7px] flex h-[15px] w-[57px] shrink-0 border border-[#c0c0c0] bg-white">
                <input aria-label="Zoom level" defaultValue="42%" className="w-10 border-r border-[#ccc] pl-[3px] text-[9px] text-[#aaa]" />
                <ChevronDown className="absolute top-[2px] right-[2px] size-[10px]" strokeWidth={3} />
            </span>
            <Sep className="mx-[5px]" />
            <Bit name="Working plane" className="w-[14px]">{planeFront}</Bit>
            <Bit name="Plan plane" box="0 0 48 38" pressed className="ml-[6px] h-[21px] w-[25px]">{planeTop}</Bit>
            <Sep className="mx-[2px]" />
            <Select label="View" value="Top/Plan" className="w-[211px] shrink-0 opacity-70" />
            <Sep className="mx-[3px]" />
            <Bit name="Rotate plan" className="ml-1 w-[17px]"><path d="M22 34L8 8" stroke="#28a745" strokeWidth="6" /><path d="M22 34l16-16" stroke="#d9302b" strokeWidth="6" /><circle cx="22" cy="34" r="5" fill="#3f8fe8" stroke="none" /></Bit>
            <input aria-label="Plan angle" defaultValue="0.00°" className="ml-[3px] h-[15px] w-[65px] shrink-0 border border-[#c0c0c0] bg-white pl-[3px] text-[9px] text-[#aaa]" />
            <Bit name="Unified view" className="ml-[10px] w-4">{stack}</Bit>
            <Bit name="Multiple views" className="ml-[11px] w-[14px]"><path d="M5 5h12v34H5zM26 5h12v12H26zM26 26h12v13H26z" /></Bit>
            <Sep className="mr-[2px] ml-[5px]" />
            <Select label="Projection" value="2D Plan" className="w-[211px] shrink-0 opacity-70" />
            <Sep className="mr-[2px] ml-[3px]" />
            <span className="relative flex opacity-70"><Select label="Render mode" value="" className="w-11 shrink-0" /><Art box="0 0 48 44" className="pointer-events-none absolute top-0 left-[9px] size-4"><Teapot /></Art></span>
            <button aria-label="View bar menu" className="ml-[3px] flex size-[15px] shrink-0 items-center justify-center border border-[#555] bg-[#f4f4f4]"><svg viewBox="0 0 5 9" className="h-[9px] w-[5px]"><path d="M0 0v9l5-4.5z" /></svg></button>
        </div>
    );
}

function ModeBar() {
    return (
        <div className="flex h-[35px] shrink-0 items-center overflow-hidden bg-[#ececec] pl-[10px]">
            <Bit name="Disable scaling" className="w-5">{marks(-6)}<circle cx="34" cy="32" r="9" stroke="#e05050" fill="#ececec" /><path d="M28 26l12 12" stroke="#e05050" /></Bit>
            <Bit name="Single scaling" pressed className="ml-[3px] h-[23px] w-[30px]">{marks(0)}</Bit>
            <Bit name="Multiple scaling" box="0 0 68 44" className="ml-[2px] w-6">{marks(-2)}{marks(24)}</Bit>
            <Sep className="mr-[6px] ml-[10px]" />
            <Bit name="Unrestricted" box="0 0 80 44" pressed className="h-[23px] w-[30px]"><path d="M24 6h24v10H24z" stroke="#5aa6cf" fill="#d8eefa" /><path d="M16 30h40v6H16z" fill="#5aa6cf" stroke="none" /><path d="M8 26h12v14H8zM52 26h12v14H52z" fill="#e2bb8a" /><path d="M72 6v34M67 12l5-7 5 7M67 34l5 7 5-7" /></Bit>
            <Sep className="mx-[6px]" />
            <Bit name="Rectangular marquee" box="0 0 60 44" pressed className="h-[23px] w-[30px]"><rect x="8" y="6" width="44" height="32" strokeWidth="4" /></Bit>
            <Bit name="Lasso marquee" box="0 0 54 44" className="ml-[6px] w-[18px]"><ellipse cx="30" cy="18" rx="21" ry="13" /><circle cx="11" cy="30" r="6" /><path d="M16 34l-4 8" /></Bit>
            <Bit name="Polygonal marquee" box="0 0 60 44" className="ml-[10px] w-5"><path d="M8 6l20 11 30-9-18 30L10 30zM8 42l8-10" /><circle cx="10" cy="28" r="6" /></Bit>
            <Sep className="mr-[6px] ml-3" />
            <Bit name="Wall insertion" box="0 0 80 44" pressed className="h-[23px] w-[30px]"><path d="M8 40V4h44v36M16 40V22h28v18" stroke="#e09a50" strokeWidth="5" /><path d="M68 6v34M62 12l6-7 6 7M62 34l6 7 6-7" /></Bit>
            <Sep className="mr-[6px] ml-[5px]" />
            <span className="text-[9px] text-[#555]">Selection Tool: Rectangular Marquee Mode</span>
            <div className="ml-auto flex items-center pr-[6px]">
                <Bit name="Snap loupe" tall className="w-[22px]"><path d="M4 42L42 3" strokeWidth="4" /><path d="M27 24l12 16" strokeWidth="6" /><circle cx="22" cy="18" r="10" fill="#cde" /><path d="M14 27L31 9" strokeWidth="2" /></Bit>
                <Bit name="Preferences" tall className="ml-4 w-[18px]">{gear}</Bit>
                <ChevronDown className="ml-[2px] size-[10px] text-[#888]" strokeWidth={3} />
                <Bit name="Render settings" tall box="0 0 48 44" className="ml-3 w-6"><Teapot />{tick}</Bit>
                <ChevronDown className="size-[10px] text-[#888]" strokeWidth={3} />
                <Bit name="Plane settings" tall className="ml-[14px] w-[22px]"><path d="M22 2l18 20-18 20L4 22z" fill="#b9bdf2" stroke="#7390d8" /><path d="M22 2v40M4 22h36" stroke="#7390d8" />{tick}</Bit>
                <ChevronDown className="size-[10px] text-[#888]" strokeWidth={3} />
                <Bit name="Show others" tall pressed className="ml-[9px] h-6 w-[31px]" box="0 0 62 44"><rect x="5" y="2" width="52" height="40" fill="#fff" stroke="#e5a42c" strokeWidth="5" /><path d="M20 22q11-11 22 0-11 11-22 0z" /><circle cx="31" cy="22" r="4" fill="#333" /></Bit>
                <Bit name="Link texture" tall pressed className="ml-[6px] h-6 w-8" box="0 0 62 44"><path d="M10 4h42v10H10z" fill="#e6d9b4" stroke="#999" strokeWidth="2" /><path d="M20 14v28M42 14v28" stroke="#999" strokeWidth="3" /><rect x="26" y="2" width="10" height="19" rx="5" strokeWidth="4" /><rect x="26" y="19" width="10" height="19" rx="5" strokeWidth="4" /></Bit>
                <Bit name="Page" tall className="ml-3 w-[18px]"><path d="M8 2h18l10 12v28H8z" fill="#fff" strokeWidth="2.5" /><path d="M26 2v12h10" /></Bit>
                <Bit name="Teapot" tall box="0 0 48 44" className="ml-4 w-6"><Teapot fill="#f4f4f4" /></Bit>
                <button aria-label="Mode bar menu" className="ml-[13px] flex size-[15px] items-center justify-center border border-[#aaa]"><svg viewBox="0 0 5 9" className="h-[8px] w-[5px]" fill="#777"><path d="M0 0v9l5-4.5z" /></svg></button>
            </div>
        </div>
    );
}

const H_LABELS = [`1'-6"`, `1'-4"`, `1'-2"`, `1'-0"`, '10"', '8"', '6"', '4"', '2"', '0"', '2"', '4"', '6"', '8"', '10"', `1'-0"`, `1'-2"`, `1'-4"`, `1'-6"`];
const V_LABELS = [`1'-0"`, '10"', '8"', '6"', '4"', '2"', '0"', '2"', '4"', '6"', '8"', '10"', `1'-0"`, `1'-2"`];
const STEP = 91.84;

function Rulers({ children }: { children: ReactNode }) {
    const minor = Array.from({ length: 320 }, (_, i) => i - 20);
    return (
        <>
            <svg className="h-[15px] w-full shrink-0 bg-white" fontSize="9" fontFamily="Liberation Sans, Arial, sans-serif">
                {minor.map((n) => {
                    const x = 35.5 + (n * STEP) / 16;
                    return x < 15 ? null : <path key={n} d={`M${x} 14v${n % 16 === 0 ? -14 : n % 8 === 0 ? -5 : -3}`} stroke="#555" />;
                })}
                {H_LABELS.map((t, i) => <text key={i} x={39 + i * STEP} y="12" fill="#555">{t}</text>)}
                <path d="M14 14.5H4000" stroke="#555" />
                <g stroke="#444" fill="none"><circle cx="6.5" cy="7.5" r="3.5" /><path d="M6.5 1.5v12M.5 7.5h12" /></g>
            </svg>
            <div className="flex min-h-0 flex-1">
                <svg className="h-full w-[14px] shrink-0 bg-white" fontSize="9" fontFamily="Liberation Sans, Arial, sans-serif">
                    {minor.map((n) => {
                        const y = 82.5 + (n * STEP) / 16;
                        return y < 0 ? null : <path key={n} d={`M13 ${y}h${n % 16 === 0 ? -13 : n % 8 === 0 ? -4 : -2}`} stroke="#555" />;
                    })}
                    {V_LABELS.map((t, i) => <text key={i} transform={`translate(11 ${79 + i * STEP}) rotate(-90)`} fill="#555">{t}</text>)}
                    <path d="M0 324.5h14M13.5 0V4000" stroke="#555" />
                </svg>
                {children}
            </div>
        </>
    );
}

// title block captions: x, y, width, text
const CAPTIONS: [number, number, number, string][] = [
    [1356, 1061, 27, 'DESIGNED BY'], [1356, 1076, 21, 'DRAWN BY'], [1356, 1091, 26, 'CHECKED BY'],
    [1356, 1106, 28, 'APPROVED BY'], [1356, 1122, 38, 'OTHER APPROVALS'], [1356, 1137, 32, 'CAD FILE NAME'],
    [1446, 1089, 15, 'TITLE'], [1448, 1124, 12, 'SIZE'], [1471, 1124, 26, 'CAGE CODE'], [1505, 1124, 40, 'DRAWING NUMBER'],
    [1626, 1124, 12, 'REV'], [1446, 1143, 16, 'SCALE'], [1492, 1143, 20, 'EST WGT'], [1560, 1143, 16, 'SHEET'], [1600, 1143, 9, 'OF'],
];

const FRAME = 'M1354 1059H1640M1354 1073.5H1444M1354 1088.5H1444M1354 1104.5H1444M1354 1119.5H1444M1354 1134.5H1444M1444 1087H1640M1444 1121H1640M1444 1138H1640M1444 1059V1150M1354 1059V1150M1462.5 1121V1138M1502.5 1121V1138M1622 1121V1138M1490.5 1138V1150M1559.5 1138V1150';

function Sheet() {
    return (
        <svg viewBox="0 0 1709 1280" className="h-full w-full bg-white" role="img" aria-label="Sheet drawing" fontFamily="Liberation Sans, Arial, sans-serif">
            <rect x="21.5" y="82.5" width="1653" height="1102" fill="#ececec" stroke="#777" />
            <rect x="32.5" y="93.5" width="1631" height="1080" fill="#fff" />
            <g fill="none">
                <path d={FRAME} stroke="#ffcf9b" strokeWidth="6" />
                <path d={FRAME} stroke="#663300" strokeWidth="3" />
                <rect x="32.5" y="93.5" width="1631" height="1080" stroke="#f9a756" strokeWidth="6" />
                <rect x="32.5" y="93.5" width="1631" height="1080" stroke="#b05a00" strokeWidth="3" />
                <rect x="55.5" y="116.5" width="1585" height="1034" stroke="#f9a756" strokeWidth="6" />
                <rect x="55.5" y="116.5" width="1585" height="1034" stroke="#b05a00" strokeWidth="3" />
                <path d="M1355 1150.5H1640.5V1059" stroke="#d06c04" strokeWidth="3" />
                <path d="M1354 1150V1059" stroke="#ff8c1a" strokeOpacity=".5" strokeWidth="6" />
            </g>
            {CAPTIONS.map(([x, y, w, t]) => (
                <g key={t}>
                    <rect x={x} y={y} width={w} height="6" fill="#ff9a3c" fillOpacity=".5" />
                    <text x={x + 1} y={y + 5} fontSize="4" fill="#b85c00">{t}</text>
                </g>
            ))}
            <g fill="#ff9a3c" fillOpacity=".5">
                <path d="M1451 1129h5v9h-5zM1479 1126h5v12h-5zM1557 1126h6v12h-6zM1629 1129h5v9h-5zM1464 1139h5v10h-5zM1514 1139h5v10h-5zM1613 1139h5v10h-5zM1579 1140h20v7h-20z" />
                <path d="M1515 1099h53v9h-53zM1518 1096h48v15h-48z" />
            </g>
            <text x="1542" y="1108" fontSize="9" textAnchor="middle" fill="#111">[Sheet Title]</text>
            <text x="1589" y="1147" fontSize="8" textAnchor="middle" fill="#222">Sht-1</text>
        </svg>
    );
}

function DrawingWindow() {
    return (
        <main className="flex min-w-0 flex-1 flex-col bg-white">
            <div className="flex h-6 shrink-0 bg-[#868686]">
                <div className="relative flex w-[240px] items-center bg-linear-to-r from-[#bdbdbd] to-[#868686] pl-[17px]">
                    <svg viewBox="0 0 12 24" className="absolute top-0 left-0 h-6 w-3"><path d="M0 0h11L5 24H0z" fill="#868686" /></svg>
                    <button aria-label="Close tab" className="flex"><svg viewBox="0 0 9 9" className="size-[9px]" stroke="#666" strokeWidth="2"><path d="M.5 .5l8 8M8.5 .5l-8 8" /></svg></button>
                    <span className="ml-1 text-[13px] leading-4 text-black">Untitled 1</span>
                    <svg viewBox="0 0 10 24" className="absolute top-0 right-0 h-6 w-[10px]" stroke="#222" strokeWidth="2.5"><path d="M1 3l7 20" /></svg>
                </div>
            </div>
            <ViewBar />
            <ModeBar />
            <Rulers><Sheet /></Rulers>
        </main>
    );
}

/* ---------- object info and navigation ---------- */

function InfoRow({ label, children, dim = false }: { label: string; children: ReactNode; dim?: boolean }) {
    return (
        <label className={'flex h-5 items-center' + (dim ? ' text-[#888]' : '')}>
            <span className="w-[105px] shrink-0 pl-[2px]">{label}</span>
            {children}
        </label>
    );
}

function ObjectInfo() {
    const field = 'h-4 min-w-0 flex-1 border border-[#b0b0b0] bg-white pl-[3px] text-[9px] text-[#222]';
    const wide = 'h-[15px] w-full rounded-[4px] border text-[9px] leading-[13px]';
    return (
        <section className="flex h-[845px] shrink-0 flex-col bg-[#e2e2e2] text-[9px] text-[#222]">
            <PanelHeader title="Object Info" />
            <div className="relative flex h-[22px] shrink-0 items-center justify-center bg-linear-to-b from-[#ececec] from-50% to-[#e2e2e2] to-50%">
                <i className="absolute inset-x-0 top-3 h-px bg-[#cfcfcf]" />
                <div className="relative flex h-[15px] overflow-hidden rounded-[4px] border border-[#bbb] bg-white leading-[13px]" role="tablist">
                    <button role="tab" aria-selected="true" className="w-[46px] bg-[#e4e4e4]">Shape</button>
                    <button role="tab" className="w-[39px] border-r border-[#ddd]">Data</button>
                    <button role="tab" className="w-[50px]">Render</button>
                </div>
                <span className="absolute top-[1px] right-[1px]"><FlyButton label="Object info menu" /></span>
            </div>
            <h3 className="h-[19px] shrink-0 pl-[3px] text-[10px] leading-[21px] font-bold text-black">Title Block Border</h3>
            <div className="mx-px flex flex-1 flex-col border border-[#c6c6c6] bg-[#ebebeb] px-1 pt-[3px]">
                <label className="flex h-5 items-center"><span className="w-[35px] pl-[2px]">Class:</span><Select label="Class" value="None" className="flex-1" /></label>
                <label className="relative flex h-5 items-center">
                    <span className="w-[35px] pl-[2px]">Layer:</span>
                    <Select label="Layer" value="Sht-1 [Sheet Title]" className="flex-1" pad="pl-7" updown />
                    <svg viewBox="0 0 12 12" className="pointer-events-none absolute left-[47px] size-[11px]" fill="none" stroke="#333" strokeWidth="1.2"><path d="M1 1h7v7H1zM0 11h9M11 0v8" /></svg>
                </label>
                <div className="mt-[2px] flex h-[68px] rounded-[4px] border border-[#dcdcdc] bg-[#e3e3e3] pt-[3px] pr-2 pl-[14px]">
                    <div className="mt-[5px] flex w-[19px] flex-col gap-[2px]">
                        <button aria-label="Top plane" className="flex h-4 items-center border border-[#aaa] bg-[#ccc]"><Art box="0 0 48 38" className="h-[14px] w-full"><path d="M24 5l20 14-20 14L4 19z" fill="#fff" stroke="#30b8da" strokeWidth="5" /><path d="M14 12l20 14M34 12L14 26" stroke="#30b8da" strokeWidth="4" /></Art></button>
                        <button aria-label="Front plane" className="flex h-4 items-center border border-[#aaa] bg-white"><Art box="0 0 42 46" className="h-[14px] w-full"><path d="M8 4h26v38L8 34zM8 19l26 2M21 4v34" stroke="#ee6fc9" /><circle cx="21" cy="20" r="4" fill="#d33" stroke="none" /></Art></button>
                    </div>
                    <div className="ml-[14px] flex flex-1 flex-col gap-1">
                        {['X:', 'Y:', 'Z:'].map((axis) => (
                            <label key={axis} className="flex h-4 items-center"><span className="w-4">{axis}</span><input defaultValue={'0"'} className={field} /></label>
                        ))}
                    </div>
                </div>
                <div className="mt-[3px]">
                    <InfoRow label="Rotation:"><input defaultValue="0.00°" className={field} /></InfoRow>
                    <InfoRow label="Style:"><Select label="Style" value="ASME" className="flex-1" /></InfoRow>
                </div>
                <div className="flex h-4 items-center"><Check label="Hide Style Parameters" /></div>
                <div className="mt-[6px] flex flex-col gap-[5px]">
                    <button className={wide + ' border-[#1b6fdc] bg-linear-to-b from-[#4b9bf8] to-[#0467e6] text-[#d6e7fd]'}>Title Block Border Settings...</button>
                    <button disabled className={wide + ' border-[#ccc] bg-[#f2f2f2] text-[#b5b5b5]'}>Edit Title Block Layout...</button>
                </div>
                <div className="mt-[3px] flex h-[14px] items-center"><Check label="This Title Block is Active" checked /></div>
                <div className="flex h-6 items-center"><Check label="Use Automatic Drawing Coordination" checked disabled /></div>
                <div>
                    <InfoRow label="Sheet Size:" dim><Select label="Sheet size" value="Fit to Page" className="flex-1" disabled /></InfoRow>
                    <InfoRow label="Orientation:" dim><Select label="Orientation" value="Landscape" className="flex-1" disabled /></InfoRow>
                    <p className="flex h-5 items-center"><span className="w-[107px] pl-[2px]">Horizontal Dimension:</span>2'11 1/2"</p>
                    <p className="flex h-[18px] items-center"><span className="w-[107px] pl-[2px]">Vertical Dimension:</span>1'11 1/2"</p>
                </div>
                <div className="flex h-[14px] items-center"><Check label="Display North Arrow" /></div>
                <button className={wide + ' mt-[7px] border-[#c4c4c4] border-b-[#aaa] bg-white'}>Drawing Stamp...</button>
            </div>
            <label className="mt-1 flex h-[19px] shrink-0 items-center bg-[#ececec] pr-[2px] pl-[5px]"><span className="w-[35px]">Name:</span><input className={field} /></label>
        </section>
    );
}

const navTabs: [string, ReactNode][] = [
    ['Classes', nodes], ['Design Layers', stack], ['Sheet Layers', sheet],
    ['Viewports', <><path d="M4 12V4h8M32 4h8v8M40 32v8h-8M12 40H4v-8" strokeWidth="6" stroke="#111" /><path d="M10 34V20l8-8 6 8 6-5 5 5v14z" fill="#b7bbf5" strokeWidth="2" /></>],
    ['Saved Views', pageArt],
    ['References', <><path d="M14 3h18l8 9v28H14z" fill="#fff" strokeWidth="2.5" /><path d="M8 38q-2-14 12-18M12 16h12v12z" stroke="#111" strokeWidth="5" /></>],
];

function Navigation() {
    return (
        <section className="flex min-h-0 flex-1 flex-col bg-[#e2e2e2] text-[#333]">
            <PanelHeader title="Navigation - Sheet Layers" />
            <div className="relative flex h-[30px] shrink-0 items-center justify-center bg-linear-to-b from-[#ececec] from-50% to-[#e2e2e2] to-50%">
                <i className="absolute inset-x-0 top-[15px] h-px bg-[#cfcfcf]" />
                <div className="relative flex h-[17px] overflow-hidden rounded-[5px] border border-[#bbb] bg-white" role="tablist">
                    {navTabs.map(([name, art], i) => (
                        <button key={name} role="tab" aria-label={name} className={'flex w-7 items-center justify-center border-r border-[#e2e2e2] ' + (i === 2 ? 'bg-[#dedede]' : '')}>
                            <Art box="0 0 44 46" className="size-[14px]">{art}</Art>
                        </button>
                    ))}
                </div>
                <span className="absolute top-[2px] right-[7px]"><FlyButton label="Navigation menu" /></span>
            </div>
            <div className="mx-[3px] mb-px min-h-0 flex-1 border border-[#ccc] bg-white">
                <table className="w-full table-fixed text-left">
                    <colgroup><col className="w-6" /><col className="w-[84px]" /><col className="w-[152px]" /><col className="w-[29px]" /><col /></colgroup>
                    <thead>
                        <tr className="h-[21px] text-[11px]">
                            <th /><th className="border-l border-[#ddd] pl-1 font-normal whitespace-nowrap">Sheet Numb...</th>
                            <th className="border-l border-[#ddd] pl-1 font-normal">Sheet Title</th>
                            <th className="border-x border-[#ddd] pl-1 font-normal">#</th><th />
                        </tr>
                    </thead>
                    <tbody>
                        <tr className="h-[15px] border-t border-[#ccc] bg-[#dcdcdc] text-[9px] text-black">
                            <td><svg viewBox="0 0 10 10" className="ml-1 size-[10px]" fill="none" stroke="#111" strokeWidth="2"><path d="M1 5l3 4 5-8" /></svg></td>
                            <td className="pl-1 font-bold">Sht-1</td><td className="pl-1">[Sheet Title]</td><td className="pl-1">1</td><td />
                        </tr>
                    </tbody>
                </table>
            </div>
        </section>
    );
}

/* ---------- resource manager ---------- */

const folders = [
    'Defaults', 'Object Styles', 'Objects - Architecture', 'Objects - Building Equip_Appliances', 'Objects - Building Furnishings',
    'Objects - Building Services', 'Objects - Ent Audio', 'Objects - Ent Controls', 'Objects - Ent Event', 'Objects - Ent Lighting Accessories',
    'Objects - Ent Lighting Gobos', 'Objects - Ent Lighting Instruments', 'Objects - Ent Stage', 'Objects - Ent Truss',
    'Objects - Landscape Furnishings', 'Objects - Landscape Plants', 'Objects - Landscape Site', 'Objects - Miscellaneous_Entourage', 'Renderworks Cameras',
];

const vwBadge = <svg viewBox="0 0 14 14" className="size-[14px]"><circle cx="7" cy="7" r="6.5" fill="#9440b8" /><circle cx="7" cy="7" r="5" fill="none" stroke="#e2c4ef" /><path d="M4.5 4.5L7 9.5l2.5-5" fill="none" stroke="#fff" strokeWidth="1.5" /></svg>;
const vwFile = <svg viewBox="0 0 13 13" className="size-[13px]"><path d="M0 0h10l3 3v10H0z" fill="#9037b8" /><circle cx="6.5" cy="6" r="4" fill="none" stroke="#e2c4ef" /><path d="M4.5 4.5l2 3.5 2-3.5M4 12h5" fill="none" stroke="#fff" /></svg>;
const person = <svg viewBox="0 0 12 12" className="size-3" fill="#444"><circle cx="6" cy="3.5" r="2.5" /><path d="M1 11q0-3 4-4V5h2v2q4 1 4 4z" /></svg>;
const people = <svg viewBox="0 0 16 12" className="h-3 w-4" fill="#444"><circle cx="3.5" cy="3.5" r="2" /><circle cx="12.5" cy="3.5" r="2" /><path d="M0 10q0-3 3.5-4 2 0 2 4zM16 10q0-3-3.5-4-2 0-2 4z" /><circle cx="8" cy="3.5" r="2.5" /><path d="M3.5 12q0-4 3.5-5h2q3.5 1 3.5 5z" /></svg>;
const star = <svg viewBox="0 0 16 15" className="size-[15px]"><path d="M8 0l2 5.5h5.5L11 9l2 6-5-3.5L3 15l2-6L.5 5.5H6z" fill="#cfc427" stroke="#857d20" /></svg>;

function TreeHead({ label, icon, open = false }: { label: string; icon: ReactNode; open?: boolean }) {
    return (
        <li className="flex h-[19px] items-center border-b border-[#c8c8c8] bg-[#f4f4f4] pl-2 text-[10px] font-bold">
            <span className="w-[10px]">{open && <svg viewBox="0 0 9 7" className="h-[7px] w-[9px]" fill="#808080"><path d="M0 0h9L4.5 7z" /></svg>}</span>
            <span className="flex w-4 justify-center">{icon}</span>
            <span className="ml-[3px]">{label}</span>
        </li>
    );
}

function TreeFolder({ label }: { label: string }) {
    return (
        <li className="flex h-[19px] items-center pl-[25px] whitespace-nowrap">
            <svg viewBox="0 0 7 8" className="h-2 w-[7px] shrink-0" fill="#808080"><path d="M0 0v8l7-4z" /></svg>
            <svg viewBox="0 0 14 12" className="ml-[3px] h-3 w-[14px] shrink-0"><path d="M.5 .5h5l1 1.5h7v9.5H.5z" fill="#fdd25c" stroke="#d6a93a" /><path d="M1 3h12" stroke="#fff0c0" /></svg>
            <span className="ml-[5px]">{label}</span>
        </li>
    );
}

function SheetThumb({ className, line }: { className: string; line: number }) {
    return (
        <svg viewBox="0 0 300 200" className={className} fill="none" stroke="#000">
            <rect x="2" y="2" width="296" height="196" fill="#fff" strokeWidth={line} />
            <rect x="6" y="6" width="289" height="188" strokeWidth={line} />
            <rect x="242" y="177" width="18" height="17" fill="#777" strokeWidth="1.5" />
            <path d="M242 181h18M242 185h18M242 190h53M260 177v17M260 177h35M260 183h35M260 189h35M270 189v5M280 189v5M292 189v5" strokeWidth="1.5" />
            <path d="M274 186h8" stroke="#555" strokeDasharray="1 1" />
        </svg>
    );
}

function PreviewSelect({ label, children }: { label: string; children: ReactNode }) {
    return (
        <span className="relative flex w-11">
            <select aria-label={label} className="h-4 w-11 appearance-none rounded-[3px] bg-[#82bbf3]"><option /></select>
            <Art box="0 0 48 44" className="pointer-events-none absolute left-2 size-4 opacity-60">{children}</Art>
            <ChevronDown className="pointer-events-none absolute top-[3px] right-[1px] size-[10px] text-[#145ca8]" strokeWidth={3} />
        </span>
    );
}

function ResourceManager() {
    const box = 'mr-[3px] ml-[5px] border border-[#b8b8b8] bg-white ';
    const push = 'h-[17px] rounded-[4px] border border-[#c4c4c4] border-b-[#aaa] bg-white leading-[15px] ';
    return (
        <aside className="flex w-[318px] shrink-0 flex-col bg-[#ececec] text-[11px] leading-[15px] text-black">
            <PanelHeader title="Resource Manager" />
            <div className="flex h-7 shrink-0 items-center pl-[5px]">
                <button aria-label="Home" className="flex h-[17px] w-[22px] items-center justify-center rounded-[4px] border border-[#bbb] bg-white">
                    <svg viewBox="0 0 16 14" className="h-[14px] w-4"><path d="M3 7h10v6H3z" fill="#f0b64c" stroke="#9a6a1e" /><path d="M.5 7.5L8 1l7.5 6.5" fill="none" stroke="#c4501f" strokeWidth="2" /><path d="M7 9h3v4H7z" fill="#7a4310" /><circle cx="8" cy="6" r="1.5" fill="#58a7ea" /></svg>
                </button>
                <button aria-label="Up one folder" className="ml-[5px] flex h-[17px] w-[22px] items-center justify-center rounded-[4px] border border-[#d0d0d0] bg-[#f2f2f2]">
                    <svg viewBox="0 0 16 14" className="h-[13px] w-4"><path d="M1 3h8v8H1z" fill="#e5e0cf" stroke="#ccc" /><path d="M4 12h9V5M10 6l3-4 3 4" fill="none" stroke="#93cf8e" strokeWidth="2.5" /></svg>
                </button>
                <label className="relative ml-[5px] flex h-[18px] w-[235px] items-center rounded-[4px] border border-[#bbb] bg-white">
                    <Search className="absolute left-[82px] size-3 text-[#777]" />
                    <input aria-label="Search" placeholder="Search" className="w-full bg-transparent pl-[98px] text-[11px] placeholder:text-[#bbb]" />
                </label>
                <button aria-label="More options" className="ml-2 text-sm leading-4 text-[#333]">»</button>
            </div>
            <div className={box + 'h-[503px] shrink-0 overflow-hidden'}>
                <ul>
                    <TreeHead label="Open Files" icon={vwBadge} open />
                    <li className="flex h-[19px] items-center gap-[5px] bg-[#dadada] pl-9 text-[10px] font-bold">{vwFile}Untitled 1</li>
                    <TreeHead label="Favorites" icon={star} />
                    <TreeHead label="Vectorworks Libraries" icon={vwBadge} open />
                    {folders.map((f) => <TreeFolder key={f} label={f} />)}
                    <TreeHead label="User Libraries" icon={person} />
                    <TreeHead label="Workgroup Libraries" icon={people} open />
                    <TreeFolder label="Workgroup Libraries(VW Shared Items-Dropbox)" />
                </ul>
            </div>
            <div className="flex h-2 shrink-0 items-center justify-center"><Dots /></div>
            <div className={box + 'min-h-0 flex-1'}>
                <nav className="flex h-[19px] items-center border-b border-[#c8c8c8] pl-[7px]">
                    {vwBadge}<span className="ml-[3px]">Open Files</span><span className="mx-2">›</span>{vwFile}<span className="ml-1">Untitled 1</span>
                </nav>
                <button className="mt-[13px] ml-1 flex w-16 flex-col items-center text-[#d4213d]">
                    <SheetThumb className="h-[47px] w-16" line={6} />
                    <span className="mt-[13px] leading-4">ASME</span>
                </button>
            </div>
            <div className="flex h-2 shrink-0 items-center justify-center"><Dots /></div>
            <div className={box + 'flex h-[199px] shrink-0 flex-col justify-end'}>
                <div className="flex h-[26px] items-center gap-3 bg-[#0076e8] pl-[10px]">
                    <PreviewSelect label="Preview view"><path d="M24 4l18 10v18L24 42 6 32V14z" fill="#c9a878" /><path d="M6 14l18 10 18-10M24 24v18" /></PreviewSelect>
                    <PreviewSelect label="Preview render mode"><Teapot /></PreviewSelect>
                </div>
            </div>
            <div className="flex h-[6px] shrink-0 items-center justify-center"><Dots /></div>
            <div className={box + 'h-[164px] shrink-0'}>
                <table className="w-full table-fixed text-left text-[#444]">
                    <thead><tr className="h-[22px] border-b border-[#ccc]"><th className="pl-[2px] font-normal">Data</th><th className="border-x border-[#ddd]" /><th /></tr></thead>
                </table>
            </div>
            <div className="flex h-6 shrink-0 items-center pl-[5px]">
                <button className={push + 'w-[101px]'}>New Resource...</button>
                <button className={push + 'ml-4 w-[84px]'}>New Folder...</button>
                <span className="ml-4">1 Item</span>
            </div>
        </aside>
    );
}

/* ---------- settings dialog ---------- */

const panes = ['Sheet Border', 'Sheet Zones/Grids', 'Title Block', 'Project Data', 'Sheet Data', 'Revision Data', 'Issue Data', 'North Point', 'Drawing Stamp', 'Document Options'];
const fields = [['File Name', 'Untitled 1'], ['Total Num Sheets', '1'], ['Project Date', ''], ['Project ID', ''], ['Project Name', '']];

function SettingsDialog() {
    const [pane, setPane] = useState('Project Data');
    const push = 'h-5 w-[69px] rounded-[4px] border text-[13px] leading-[18px] ';
    const live = 'border-[#c4c4c4] border-b-[#aaa] bg-white text-[#222]';
    const dead = 'border-[#d2d2d2] bg-[#ededed] text-[#b0b0b0]';
    return (
        <div role="dialog" aria-label="Title Block Border Settings" className="absolute top-[301px] left-[448px] flex w-[1124px] flex-col rounded-[5px] bg-[#ececec] text-[13px] leading-4 text-black shadow-[0_22px_45px_rgba(0,0,0,0.5),0_0_3px_rgba(0,0,0,0.5)]">
            <header className="relative flex h-[22px] items-center justify-center rounded-t-[5px] border-b border-[#b4b1b4] bg-linear-to-b from-[#e8e6e9] to-[#d2d0d3]">
                <span className="absolute left-2 flex gap-2">
                    <button aria-label="Close" className="size-3 rounded-full border border-[#bbb] bg-[#cfcdd0]" />
                    <button aria-label="Minimize" className="size-3 rounded-full border border-[#bbb] bg-[#cfcdd0]" />
                    <button aria-label="Zoom" className="size-3 rounded-full border border-[#2aa93a] bg-[#33c748]" />
                </span>
                <h1 className="text-[#333]">Title Block Border Settings</h1>
                <button aria-label="Dialog help" className="absolute right-1 font-bold">?</button>
            </header>
            <div className="mt-[29px] flex h-[21px] items-center pl-[39px]">
                <label className="flex items-center">
                    <span className="w-[69px]">Use Style:</span>
                    <span className="relative flex h-[21px] w-56">
                        <select className="size-full appearance-none rounded-[4px] border border-[#c4c4c4] border-b-[#aaa] bg-white pl-2"><option>ASME</option></select>
                        <i className="pointer-events-none absolute inset-y-0 right-0 flex w-[17px] items-center justify-center rounded-r-[4px] bg-linear-to-b from-[#65b0fb] to-[#0b7bf6]">
                            <ChevronsUpDown className="size-[14px] text-white" strokeWidth={2.5} />
                        </i>
                    </span>
                </label>
                <button className="ml-4 h-[21px] w-[139px] rounded-[4px] border border-[#c4c4c4] border-b-[#aaa] bg-white leading-[18px]">Convert To Unstyled</button>
            </div>
            <div className="mt-[21px] flex h-[650px] pr-5 pl-[17px]">
                <ul className="w-40 shrink-0 rounded-[2px] border-[3px] border-[#8fc3f3] bg-white px-px pt-[2px]" role="listbox" aria-label="Settings panes">
                    {panes.map((p) => (
                        <li key={p}>
                            <button
                                role="option"
                                aria-selected={p === pane}
                                onClick={() => setPane(p)}
                                className={'block h-[17px] w-full pl-[2px] text-left leading-[17px] ' + (p === pane ? 'bg-[#0a6bd8] text-white' : '')}
                            >
                                {p}
                            </button>
                        </li>
                    ))}
                </ul>
                <section className="ml-[29px] flex w-[583px] flex-col">
                    <h2 className="h-5 pl-[10px] text-xs leading-[26px]">{pane}</h2>
                    <div className="flex h-[623px] flex-col items-start rounded-[4px] border-t border-[#d0d0d0] bg-[#e2e2e2] pt-[11px] pl-[22px]">
                        <div className="h-[402px] w-[490px] border border-[#c6c6c6] bg-white text-[11px]">
                            <table className="w-full table-fixed text-left">
                                <colgroup><col className="w-[150px]" /><col className="w-[258px]" /><col /></colgroup>
                                <thead>
                                    <tr className="h-[21px] border-b border-[#ccc] text-[#444]">
                                        <th className="pl-[2px] font-normal">Field</th>
                                        <th className="border-x border-[#ddd] pl-[2px] font-normal">Value</th><th />
                                    </tr>
                                </thead>
                                <tbody>
                                    {fields.map(([k, v]) => <tr key={k} className="h-[17px] leading-[17px]"><td className="pl-[6px]">{k}</td><td className="pl-[6px]">{v}</td><td /></tr>)}
                                </tbody>
                            </table>
                        </div>
                        <div className="mt-[13px] flex gap-3">
                            <button className={push + live}>Add...</button>
                            <button disabled className={push + dead}>Edit...</button>
                            <button disabled className={push + dead}>Delete</button>
                        </div>
                        <textarea aria-label="Field description" className="mt-[53px] ml-[34px] h-[99px] w-[296px] resize-none border border-[#c6c6c6] bg-white" />
                    </div>
                </section>
                <section className="ml-auto flex w-[300px] flex-col">
                    <h2 className="mt-2 flex h-[18px] items-center gap-2 text-xs after:h-px after:flex-1 after:bg-[#cfcfcf]">Preview</h2>
                    <div className="mt-[7px] flex h-[580px] items-center bg-white"><SheetThumb className="w-[300px]" line={1.8} /></div>
                    <div className="mt-2 flex"><Check big label="Zoom In on the Title Block" /></div>
                </section>
            </div>
            <p className="mt-[11px] mr-5 ml-[19px] h-[19px] bg-[#e2e2e2] pl-1 text-[9px] leading-[19px] text-[#222]">Select a pane of settings to be displayed on the right.</p>
            <div className="mt-[19px] mb-5 flex justify-end gap-3 pr-5">
                <button className={push + live}>Cancel</button>
                <button className={push + 'border-[#1a76e0] bg-linear-to-b from-[#5aaafa] to-[#0873f0] text-white'}>OK</button>
            </div>
        </div>
    );
}

/* callout arrows drawn over everything */
function Callouts() {
    return (
        <svg className="pointer-events-none absolute inset-0 h-full w-full drop-shadow-[2px_4px_2px_rgba(0,0,0,0.5)]" fill="#fb2a12" stroke="#fb2a12" strokeLinecap="round">
            <path d="M1884 265L1118 311" strokeWidth="8" />
            <path d="M1101 312l21-14 4 27z" stroke="none" />
            <path d="M569 456l70-41" strokeWidth="9" />
            <path d="M656 409l-26-1 13 23z" stroke="none" />
        </svg>
    );
}

const readouts = [`X:  1'6.656"`, 'Y:  6.719"', `L:  1'7.829"`, 'A:  19.81°'];

export default function App() {
    return (
        <div className="relative flex h-screen flex-col overflow-hidden bg-[#bababa] [font-family:Inter,Roboto,sans-serif]">
            <header className="relative flex h-[22px] shrink-0 items-center justify-center border-b border-[#c8c8c8] bg-[#f6f6f6] text-xs text-[#999]">
                <span className="absolute left-2 flex items-center gap-2">
                    <button aria-label="Close window" className="flex size-3 items-center justify-center rounded-full border border-[#ccc] bg-[#dadada]"><i className="size-1 rounded-full bg-[#555]" /></button>
                    <button aria-label="Minimize window" className="size-3 rounded-full border border-[#ccc] bg-[#dadada]" />
                    <button aria-label="Zoom window" className="size-3 rounded-full border border-[#ccc] bg-[#dadada]" />
                    <span className="ml-[9px]">Vectorworks Designer 2018</span>
                </span>
                <span className="text-[13px]">Untitled 1</span>
            </header>
            <div className="flex min-h-0 flex-1">
                <LeftColumn />
                <Gutter />
                <DrawingWindow />
                <Gutter />
                <div className="flex w-[329px] shrink-0 flex-col">
                    <ObjectInfo />
                    <Splitter />
                    <Navigation />
                </div>
                <Gutter />
                <ResourceManager />
            </div>
            <footer className="flex h-[15px] shrink-0 items-center bg-[#d8d8d8] pl-2 text-[9px] text-[#666]">
                <span>For Help, press F1 or click the ? icon</span>
                <div className="ml-auto flex gap-[2px]">
                    {readouts.map((r) => <span key={r} className="h-[13px] w-[79px] border border-[#bbb] pl-[3px] leading-[12px] whitespace-pre">{r}</span>)}
                </div>
                <Bell className="ml-2 size-[11px] fill-[#555]" />
                <svg viewBox="0 0 8 9" className="mr-4 ml-3 h-[9px] w-2" fill="#bbb"><path d="M0 0v9l8-4.5z" /></svg>
            </footer>
            <SettingsDialog />
            <Callouts />
        </div>
    );
}
